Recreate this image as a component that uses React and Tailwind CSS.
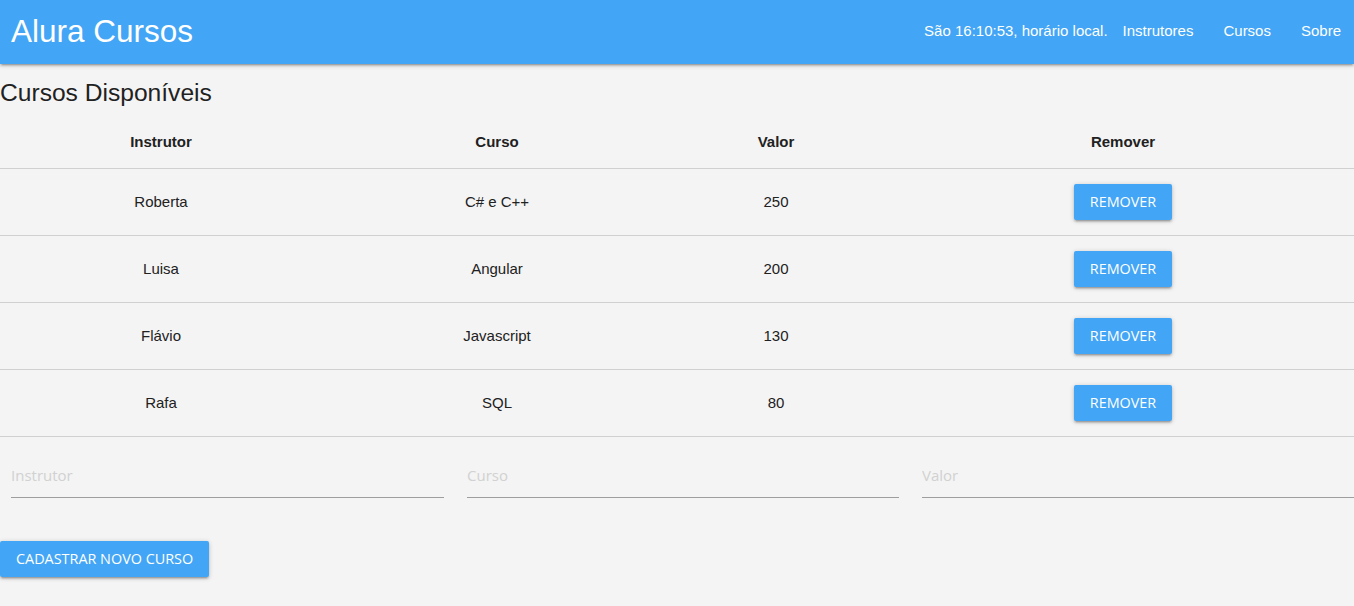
const CURSOS = [
  { instrutor: 'Roberta', curso: 'C# e C++', valor: 250 },
  { instrutor: 'Luisa', curso: 'Angular', valor: 200 },
  { instrutor: 'Flávio', curso: 'Javascript', valor: 130 },
  { instrutor: 'Rafa', curso: 'SQL', valor: 80 },
];

const COLS = 'grid grid-cols-[322px_350px_208px_1fr] items-center text-center';

function BlueButton({ children, className = '' }) {
  return (
    <button
      className={`h-9 px-4 rounded-[2px] bg-[#42a5f5] text-white text-[14.4px] uppercase font-['Open_Sans',sans-serif] shadow-[0_2px_2px_0_rgba(0,0,0,0.14),0_3px_1px_-2px_rgba(0,0,0,0.12),0_1px_5px_0_rgba(0,0,0,0.2)] ${className}`}
    >
      {children}
    </button>
  );
}

function Field({ placeholder }) {
  return (
    <div className="border-b border-[#9e9e9e] h-[45px] flex items-center">
      <input
        type="text"
        placeholder={placeholder}
        className="w-full bg-transparent text-[15px] font-['Open_Sans',sans-serif] placeholder-[#d1d1d1] focus:outline-none"
      />
    </div>
  );
}

export default function App() {
  return (
    <div className="min-h-screen bg-[#f4f4f4] font-['Liberation_Sans',Arial,sans-serif] text-[#212121]">
      {/* Nav */}
      <nav className="relative z-10 h-16 bg-[#42a5f5] text-white flex items-center justify-between shadow-[0_2px_2px_0_rgba(0,0,0,0.14),0_3px_1px_-2px_rgba(0,0,0,0.12),0_1px_5px_0_rgba(0,0,0,0.2)]">
        <a className="pl-[11px] text-[31.5px] leading-none">Alura Cursos</a>
        <div className="flex items-center text-[15px] pb-[2px]">
          <span>São 16:10:53, horário local.</span>
          <a className="px-[15px]">Instrutores</a>
          <a className="px-[15px]">Cursos</a>
          <a className="pl-[15px] pr-[13px]">Sobre</a>
        </div>
      </nav>

      {/* Title */}
      <h5 className="h-[52px] flex items-center pt-[6px] text-[24.6px] leading-none">Cursos Disponíveis</h5>

      {/* Table */}
      <div className="text-[15px]">
        <div className={`${COLS} h-[53px] border-b border-[#d0d0d0] font-bold`}>
          <div>Instrutor</div>
          <div>Curso</div>
          <div>Valor</div>
          <div className="pl-3">Remover</div>
        </div>
        {CURSOS.map((c) => (
          <div key={c.instrutor} className={`${COLS} h-[67px] border-b border-[#d0d0d0]`}>
            <div>{c.instrutor}</div>
            <div>{c.curso}</div>
            <div>{c.valor}</div>
            <div className="pl-3">
              <BlueButton>Remover</BlueButton>
            </div>
          </div>
        ))}
      </div>

      {/* Form */}
      <div className="grid grid-cols-[433px_432px_432px] gap-x-[23px] pl-[11px] mt-[16px]">
        <Field placeholder="Instrutor" />
        <Field placeholder="Curso" />
        <Field placeholder="Valor" />
      </div>

      <BlueButton className="mt-[43px]">Cadastrar novo curso</BlueButton>
    </div>
  );
}
